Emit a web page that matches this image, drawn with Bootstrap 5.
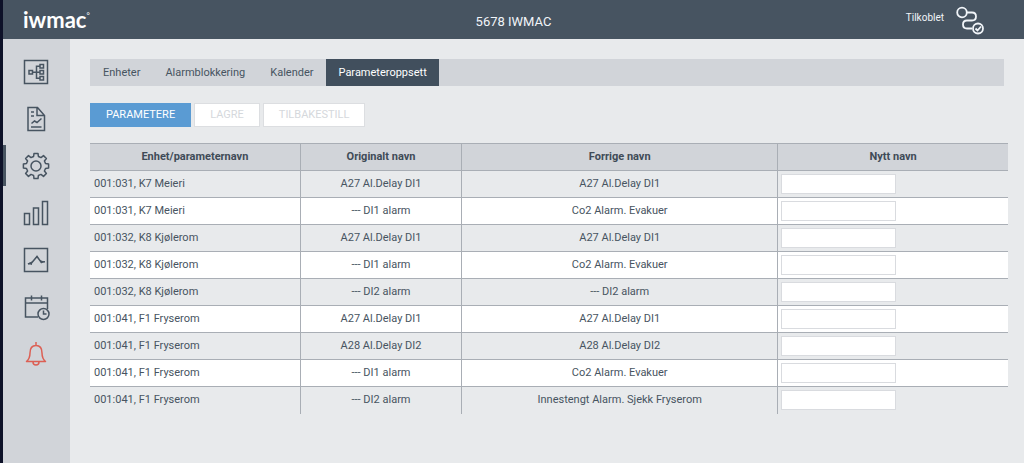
<!DOCTYPE html>
<html lang="nb">
<head>
<meta charset="utf-8">
<meta name="viewport" content="width=device-width, initial-scale=1">
<title>5678 IWMAC</title>
<link href="https://cdn.jsdelivr.net/npm/bootstrap@5.3.0/dist/css/bootstrap.min.css" rel="stylesheet">
<style>
:root{--slate:#475461;--panel:#d1d4d9;--page:#e8eaec;--rule:#a9aeb5}
body{font-family:Roboto,"Liberation Sans",sans-serif;font-size:11px;line-height:16px;color:var(--slate);background:var(--page);border-left:3px solid #0d1128}
.topbar{background:var(--slate);color:#f1f5f9;height:39px}
.brand{font-family:Lato,"Open Sans",sans-serif;font-weight:700;font-size:22px;line-height:32px;color:#fff;text-decoration:none}
.brand sup{font-size:8px;font-weight:400;top:-10px}
.site-title{font-size:13px;line-height:16px}
.status{font-size:10px}
.topbar svg{stroke-width:1.800}
.sidebar{width:67px;background:var(--panel);padding-top:9px}
.side-link{height:47px;color:var(--slate);border-left:3px solid transparent;padding-right:4px}
.side-link.current{background:linear-gradient(var(--slate),var(--slate)) no-repeat 0 center/3px 41px;background-origin:border-box}
.side-link.alarm{color:#dc5f54}
svg{fill:none;stroke:currentColor;stroke-width:1.5;display:block}
.main-area{padding:20px 16px 20px 20px}
.tabs{background:var(--panel);margin-right:4px}
.tabs .nav-link{color:var(--slate);padding:6px 12px 5px 13px;border-radius:0}
.tabs .nav-link.active{background:#414f5d;color:#fff}
.actions{margin:17px 0 16px;gap:3px}
.actions .btn{font-size:11px;line-height:16px;padding:3px 15px;border-radius:0}
.btn-main{--bs-btn-color:#fff;--bs-btn-bg:#5a9bd3;--bs-btn-border-color:#5a9bd3;--bs-btn-hover-color:#fff;--bs-btn-hover-bg:#4a8bc3}
.btn-idle{--bs-btn-disabled-color:#d5d8dc;--bs-btn-disabled-bg:#fff;--bs-btn-disabled-border-color:#dcdee1;--bs-btn-disabled-opacity:1}
.names{table-layout:fixed;color:var(--slate);border-color:var(--rule)}
.names th,.names td{height:27px;padding:0 3px;vertical-align:middle;text-align:center;border:solid var(--rule);border-width:0 1px 1px 0}
.names thead th{background:var(--panel);border-top-width:1px;color:#3f4b57}
.names td:first-child{text-align:left;padding-left:4px}
.names th:last-child,.names td:last-child{border-right:0}
.names tbody tr:last-child td{border-bottom:0}
.names tbody tr:nth-child(even){background:#fff}
.names .form-control{width:115px;height:20px;min-height:0;padding:0 4px;font-size:11px;border-radius:0;border-color:#d9dbdf;background:#fff}
.c1{width:22.9%}.c2{width:17.6%}.c3{width:34.4%}
</style>
</head>
<body class="min-vh-100 d-flex flex-column">
<header class="topbar d-flex align-items-center">
  <div class="col"><div class="ps-3 ms-1"><a class="brand" href="#">iwmac<sup>°</sup></a></div></div>
  <h1 class="site-title m-0 pt-1 fw-normal">5678 IWMAC</h1>
  <div class="col"><div class="d-flex justify-content-end align-items-center pe-4 me-3">
    <span class="status pe-2 me-1 pb-1">Tilkoblet</span>
    <svg width="28" height="30" viewBox="1 0 28 30" role="img" aria-label="Tilkoblet"><circle cx="7" cy="7.500" r="4.800"/><path d="M12 7.500h5q4 0 4 4t-4 4h-5q-4 0-4 4t4 4h5"/><circle cx="23" cy="23.500" r="5"/><path d="m20.500 23.500 2 2 3.500-4"/></svg>
  </div></div>
</header>
<div class="d-flex flex-grow-1">
  <nav class="sidebar flex-shrink-0 d-flex flex-column" aria-label="Hovedmeny">
    <a class="side-link d-flex align-items-center justify-content-center" href="#" aria-label="Oversikt"><svg width="28" height="28" viewBox="0 0 28 28"><path d="M2.500 2.500h23v23h-23zM7 12.500h3.500V16H7zM18 6.500h3.500V10H18zM18 12.500h3.500V16H18zM18 18.500h3.500V22H18zM10.500 14.200H18M18 8.200h-3.500v12H18"/></svg></a>
    <a class="side-link d-flex align-items-center justify-content-center" href="#" aria-label="Rapporter"><svg width="28" height="28" viewBox="0 0 28 28"><path d="M6 2.500h9.500l7 8v15H6zM15 2.500v8h7.500M9 7h3M9 11h3M9 22h10.500M9.500 18.500l3-2.500 2.500 1.500 4.500-4"/></svg></a>
    <a class="side-link current d-flex align-items-center justify-content-center" href="#" aria-label="Innstillinger" aria-current="page"><svg width="28" height="28" viewBox="0 0 28 28" stroke-linejoin="round"><path d="M23.500 16.400 26.600 16V12l-3.100-.4Q23 10.300 22.400 9l2-2.500L21.500 3.600 19 5.600Q17.700 5 16.400 4.500L16 1.400H12l-.4 3.100Q10.300 5 9 5.600L6.500 3.600 3.600 6.500l2 2.500Q5 10.300 4.500 11.600L1.400 12V16l3.100.4Q5 17.700 5.600 19l-2 2.500 2.900 2.900 2.500-2Q10.300 23 11.600 23.500l.4 3.100H16l.4-3.100Q17.700 23 19 22.400l2.500 2 2.900-2.900-2-2.500Q23 17.700 23.500 16.400z"/><circle cx="14" cy="14" r="5"/></svg></a>
    <a class="side-link d-flex align-items-center justify-content-center" href="#" aria-label="Statistikk"><svg width="28" height="28" viewBox="0 0 28 28"><path d="M2.500 14.500h5v11h-5zM11.500 9h5v16.500h-5zM20.500 2.500h5v23h-5z"/></svg></a>
    <a class="side-link d-flex align-items-center justify-content-center" href="#" aria-label="Trender"><svg width="28" height="28" viewBox="0 0 28 28"><path d="M2.500 2.500h23v23h-23z"/><path d="m6 18 3.500-1 5.500-6.500 4 5.500 4-.3"/><path d="M5.500 17.500 10 15.500V19zM13.500 12l1.500-2.500 1.500 2.500zM18 14l4.500 1.700L19 17.500z" fill="currentColor" stroke="none"/></svg></a>
    <a class="side-link d-flex align-items-center justify-content-center" href="#" aria-label="Kalender"><svg width="28" height="28" viewBox="0 0 28 28"><path d="M16 24H3.500V5h22v11M3.500 10h22M9.500 2.500v5M19.500 2.500v5"/><circle cx="21.500" cy="21" r="5.500"/><path d="M21.500 17.500V21h3"/></svg></a>
    <a class="side-link alarm d-flex align-items-center justify-content-center" href="#" aria-label="Alarmer"><svg width="28" height="28" viewBox="0 0 28 28"><path d="M14 2v3M4.500 21.500h19q-3.500-3-3.500-8.500 0-7.500-6-7.500T8 13q0 5.500-3.500 8.500zM11 22q0 3 3 3t3-3" stroke-linejoin="round"/></svg></a>
  </nav>
  <main class="main-area flex-grow-1">
    <nav class="tabs nav" aria-label="Innstillinger">
      <a class="nav-link" href="#">Enheter</a><a class="nav-link" href="#">Alarmblokkering</a><a class="nav-link" href="#">Kalender</a><a class="nav-link active" href="#" aria-current="page">Parameteroppsett</a>
    </nav>
    <div class="actions d-flex">
      <button type="button" class="btn btn-main">PARAMETERE</button>
      <button type="button" class="btn btn-idle" disabled>LAGRE</button>
      <button type="button" class="btn btn-idle" disabled>TILBAKESTILL</button>
    </div>
    <table class="names w-100">
      <thead><tr><th class="c1" scope="col">Enhet/parameternavn</th><th class="c2" scope="col">Originalt navn</th><th class="c3" scope="col">Forrige navn</th><th scope="col">Nytt navn</th></tr></thead>
      <tbody>
        <tr><td>001:031, K7 Meieri</td><td>A27 Al.Delay DI1</td><td>A27 Al.Delay DI1</td><td><input type="text" class="form-control" aria-label="Nytt navn 1"></td></tr>
        <tr><td>001:031, K7 Meieri</td><td>--- DI1 alarm</td><td>Co2 Alarm. Evakuer</td><td><input type="text" class="form-control" aria-label="Nytt navn 2"></td></tr>
        <tr><td>001:032, K8 Kjølerom</td><td>A27 Al.Delay DI1</td><td>A27 Al.Delay DI1</td><td><input type="text" class="form-control" aria-label="Nytt navn 3"></td></tr>
        <tr><td>001:032, K8 Kjølerom</td><td>--- DI1 alarm</td><td>Co2 Alarm. Evakuer</td><td><input type="text" class="form-control" aria-label="Nytt navn 4"></td></tr>
        <tr><td>001:032, K8 Kjølerom</td><td>--- DI2 alarm</td><td>--- DI2 alarm</td><td><input type="text" class="form-control" aria-label="Nytt navn 5"></td></tr>
        <tr><td>001:041, F1 Fryserom</td><td>A27 Al.Delay DI1</td><td>A27 Al.Delay DI1</td><td><input type="text" class="form-control" aria-label="Nytt navn 6"></td></tr>
        <tr><td>001:041, F1 Fryserom</td><td>A28 Al.Delay DI2</td><td>A28 Al.Delay DI2</td><td><input type="text" class="form-control" aria-label="Nytt navn 7"></td></tr>
        <tr><td>001:041, F1 Fryserom</td><td>--- DI1 alarm</td><td>Co2 Alarm. Evakuer</td><td><input type="text" class="form-control" aria-label="Nytt navn 8"></td></tr>
        <tr><td>001:041, F1 Fryserom</td><td>--- DI2 alarm</td><td>Innestengt Alarm. Sjekk Fryserom</td><td><input type="text" class="form-control" aria-label="Nytt navn 9"></td></tr>
      </tbody>
    </table>
  </main>
</div>
<script src="https://cdn.jsdelivr.net/npm/bootstrap@5.3.0/dist/js/bootstrap.bundle.min.js"></script>
</body>
</html>
